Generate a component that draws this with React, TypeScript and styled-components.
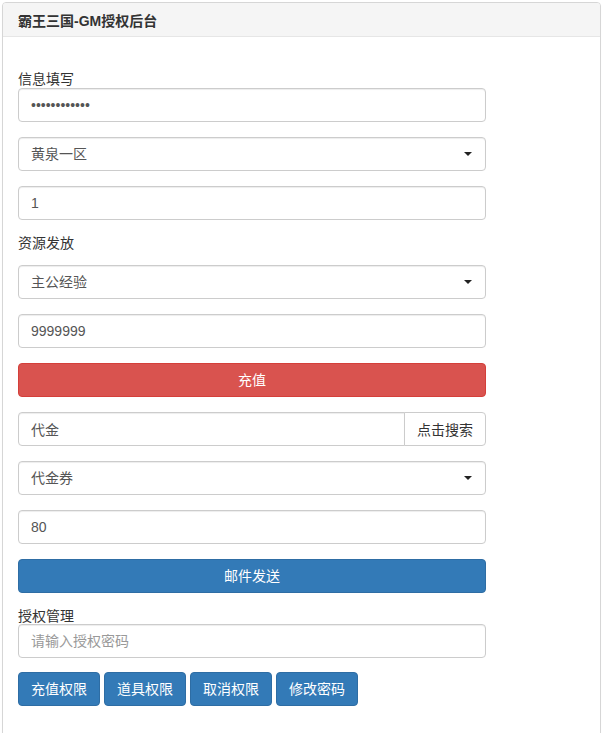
import React from 'react'
import styled, { createGlobalStyle } from 'styled-components'

const GlobalStyle = createGlobalStyle`
  html, body {
    margin: 0;
    padding: 0;
    background: #fff;
  }
  body {
    font-family: 'Liberation Sans', Arial, 'Noto Sans CJK SC', sans-serif;
    font-size: 14px;
    color: #333;
  }
  * {
    box-sizing: border-box;
  }
`

const font = `'Liberation Sans', Arial, 'Noto Sans CJK SC', sans-serif`

const Panel = styled.div`
  margin: 2px 0 0 2px;
  width: 599px;
  min-height: 760px;
  border: 1px solid #d6d6d6;
  border-radius: 4px;
  background: #fff;
  box-shadow: 0 1px 1px rgba(0, 0, 0, 0.05);
`

const PanelHeading = styled.div`
  height: 34px;
  padding: 0 15px;
  display: flex;
  align-items: center;
  background: #f5f5f5;
  border-bottom: 1px solid #e6e6e6;
  border-radius: 3px 3px 0 0;
  font-weight: bold;
  font-size: 14px;
  color: #333;
`

const PanelBody = styled.div`
  padding: 34px 15px 15px;
`

const Form = styled.form`
  width: 468px;
  display: flex;
  flex-direction: column;
`

const Label = styled.label<{ $gap?: number }>`
  display: block;
  height: 17px;
  line-height: 17px;
  margin-bottom: ${p => p.$gap ?? 0}px;
  font-size: 14px;
  color: #333;
`

const Group = styled.div<{ $last?: boolean }>`
  margin-bottom: ${p => (p.$last ? 0 : 15)}px;
`

const Input = styled.input`
  display: block;
  width: 100%;
  height: 34px;
  padding: 6px 12px;
  font-family: ${font};
  font-size: 14px;
  color: #555;
  background: #fff;
  border: 1px solid #ccc;
  border-radius: 4px;
  box-shadow: inset 0 1px 1px rgba(0, 0, 0, 0.075);
  outline: none;
  &::placeholder {
    color: #999;
  }
`

const SelectWrap = styled.div`
  position: relative;
  &::after {
    content: '';
    position: absolute;
    right: 14px;
    top: 15px;
    border-left: 4px solid transparent;
    border-right: 4px solid transparent;
    border-top: 4px solid #222;
    pointer-events: none;
  }
`

const Select = styled.select`
  display: block;
  width: 100%;
  height: 34px;
  padding: 6px 12px;
  font-family: ${font};
  font-size: 14px;
  color: #555;
  background: #fff;
  border: 1px solid #ccc;
  border-radius: 4px;
  box-shadow: inset 0 1px 1px rgba(0, 0, 0, 0.075);
  appearance: none;
  outline: none;
`

const InputGroup = styled.div`
  display: flex;
  ${Input} {
    flex: 1;
    border-radius: 4px 0 0 4px;
  }
`

const AddonButton = styled.button`
  flex: 0 0 82px;
  height: 34px;
  margin-left: -1px;
  padding: 6px 12px;
  font-family: ${font};
  font-size: 14px;
  color: #333;
  background: #fff;
  border: 1px solid #ccc;
  border-radius: 0 4px 4px 0;
  white-space: nowrap;
`

const palette = {
  danger: { bg: '#d9534f', border: '#d43f3a' },
  primary: { bg: '#337ab7', border: '#2e6da4' }
}

const Button = styled.button<{ $kind: 'danger' | 'primary'; $block?: boolean }>`
  display: block;
  width: ${p => (p.$block ? '100%' : 'auto')};
  height: 34px;
  padding: 6px 12px;
  font-family: ${font};
  font-size: 14px;
  line-height: 20px;
  color: #fff;
  background: ${p => palette[p.$kind].bg};
  border: 1px solid ${p => palette[p.$kind].border};
  border-radius: 4px;
  white-space: nowrap;
  cursor: pointer;
`

const ButtonRow = styled.div`
  display: flex;
  gap: 4px;
  margin-top: 14px;
`

export default function App() {
  return (
    <>
      <GlobalStyle />
      <Panel>
        <PanelHeading>霸王三国-GM授权后台</PanelHeading>
        <PanelBody>
          <Form onSubmit={e => e.preventDefault()}>
            <Label>信息填写</Label>
            <Group>
              <Input type='password' defaultValue='123456789012' />
            </Group>
            <Group>
              <SelectWrap>
                <Select defaultValue='1'>
                  <option value='1'>黄泉一区</option>
                </Select>
              </SelectWrap>
            </Group>
            <Group>
              <Input type='text' defaultValue='1' />
            </Group>

            <Label $gap={13}>资源发放</Label>
            <Group>
              <SelectWrap>
                <Select defaultValue='exp'>
                  <option value='exp'>主公经验</option>
                </Select>
              </SelectWrap>
            </Group>
            <Group>
              <Input type='text' defaultValue='9999999' />
            </Group>
            <Group>
              <Button type='button' $kind='danger' $block>
                充值
              </Button>
            </Group>
            <Group>
              <InputGroup>
                <Input type='text' defaultValue='代金' />
                <AddonButton type='button'>点击搜索</AddonButton>
              </InputGroup>
            </Group>
            <Group>
              <SelectWrap>
                <Select defaultValue='voucher'>
                  <option value='voucher'>代金券</option>
                </Select>
              </SelectWrap>
            </Group>
            <Group>
              <Input type='text' defaultValue='80' />
            </Group>
            <Group>
              <Button type='button' $kind='primary' $block>
                邮件发送
              </Button>
            </Group>

            <Label $gap={-1}>授权管理</Label>
            <Group $last>
              <Input type='password' placeholder='请输入授权密码' />
            </Group>
            <ButtonRow>
              <Button type='button' $kind='primary'>充值权限</Button>
              <Button type='button' $kind='primary'>道具权限</Button>
              <Button type='button' $kind='primary'>取消权限</Button>
              <Button type='button' $kind='primary'>修改密码</Button>
            </ButtonRow>
          </Form>
        </PanelBody>
      </Panel>
    </>
  )
}
